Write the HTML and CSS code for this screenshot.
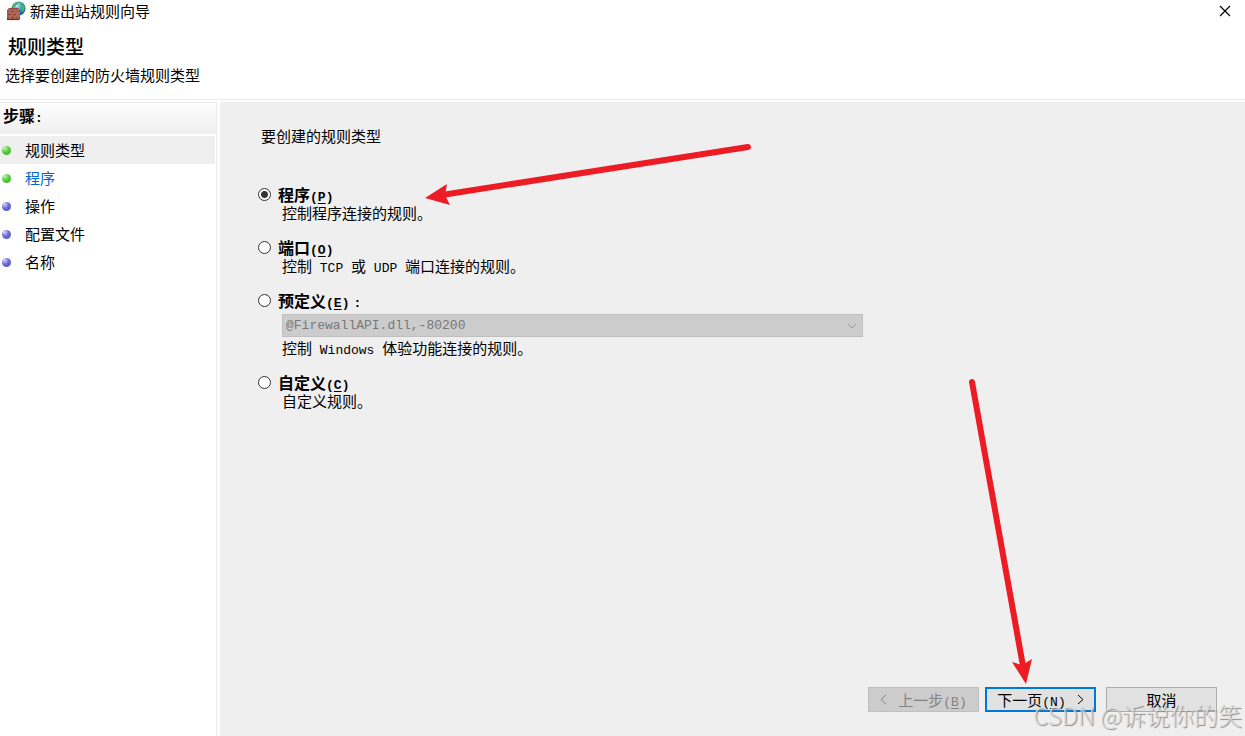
FILE: index.html
```html
<!DOCTYPE html>
<html lang="zh-CN">
<head>
<meta charset="utf-8">
<title>新建出站规则向导</title>
<link rel="stylesheet" href="styles.css">
</head>
<body>
<div class="wizard">
  <header class="head">
    <div class="titlebar">
      <svg class="app-icon" width="20" height="20" viewBox="0 0 20 20" aria-hidden="true">
        <defs>
          <radialGradient id="globe" cx="40%" cy="30%" r="75%"><stop offset="0" stop-color="#c4e9fa"/><stop offset=".5" stop-color="#2f8fd6"/><stop offset="1" stop-color="#164c9a"/></radialGradient>
        </defs>
        <circle cx="12.500" cy="7.500" r="7" fill="url(#globe)"/>
        <path d="M9 2q2-1.500 4-1l-1 2-2 1-1 2-2 1q-.6-3 2-5zM15 2.500q3 1 4 4l-2 5-2-3 1-2-2-2z" fill="#49b749"/>
        <path d="M1 9l2-2h9l2 2v9l-2 1H1z" fill="#984a3c"/>
        <path d="M1 9h11l2-1M1 12h13M1 15h13M4 9v3M9 9v3M6 12v3M11 12v3M4 15v4M9 15v4M12 9v10" stroke="#ce9586" stroke-width=".6" fill="none"/>
        <path d="M1 18.600h11l2-1" stroke="#612e29" fill="none"/>
      </svg>
      <span class="caption">新建出站规则向导</span>
      <button class="close" type="button" aria-label="关闭">
        <svg width="12" height="12" viewBox="0 0 12 12"><path d="M1 1l10 10M11 1L1 11" stroke="#000" stroke-width="1.200"/></svg>
      </button>
    </div>
    <h1 class="heading">规则类型</h1>
    <p class="subheading">选择要创建的防火墙规则类型</p>
  </header>

  <div class="body">
    <nav class="steps">
      <h2 class="steps-title">步骤<span class="en">:</span></h2>
      <ul class="step-list">
        <li class="step current"><span class="dot done"></span>规则类型</li>
        <li class="step"><span class="dot done"></span><a href="#program">程序</a></li>
        <li class="step"><span class="dot"></span>操作</li>
        <li class="step"><span class="dot"></span>配置文件</li>
        <li class="step"><span class="dot"></span>名称</li>
      </ul>
    </nav>

    <main class="content">
      <form class="form">
        <p class="question">要创建的规则类型</p>
        <div class="options">
          <div class="option">
            <input class="radio" type="radio" name="type" id="program" checked>
            <label class="name" for="program">程序<span class="en">(<u>P</u>)</span></label>
            <p class="desc">控制程序连接的规则。</p>
          </div>
          <div class="option">
            <input class="radio" type="radio" name="type" id="port">
            <label class="name" for="port">端口<span class="en">(<u>O</u>)</span></label>
            <p class="desc">控制<span class="en"> TCP </span>或<span class="en"> UDP </span>端口连接的规则。</p>
          </div>
          <div class="option">
            <input class="radio" type="radio" name="type" id="predefined">
            <label class="name" for="predefined">预定义<span class="en">(<u>E</u>)</span><span class="en">:</span></label>
            <div class="combo">
              <select class="select" aria-label="预定义" disabled><option>@FirewallAPI.dll,-80200</option></select>
              <svg class="chevron" width="10" height="6" viewBox="0 0 10 6"><path d="M1 1l4 4 4-4" fill="none" stroke="#9b9b9b"/></svg>
            </div>
            <p class="desc">控制<span class="en"> Windows </span>体验功能连接的规则。</p>
          </div>
          <div class="option">
            <input class="radio" type="radio" name="type" id="custom">
            <label class="name" for="custom">自定义<span class="en">(<u>C</u>)</span></label>
            <p class="desc">自定义规则。</p>
          </div>
        </div>
      </form>
      <footer class="actions">
        <button class="btn" type="button" disabled><svg class="angle" width="7" height="11" viewBox="0 0 7 11"><path d="M6 1L1 5.500l5 4.500"/></svg><span>上一步<span class="en">(<u>B</u>)</span></span></button>
        <button class="btn primary" type="button"><span>下一页<span class="en">(<u>N</u>)</span></span><svg class="angle" width="7" height="11" viewBox="0 0 7 11"><path d="M1 1l5 4.500L1 10"/></svg></button>
        <button class="btn cancel" type="button">取消</button>
      </footer>
    </main>
  </div>

  <svg class="arrows" width="1040" height="690" viewBox="0 0 1040 690" aria-hidden="true">
    <g stroke="#ed1c24" stroke-width="6" stroke-linecap="round">
      <path d="M748 147L442 195"/>
      <path d="M972 382L1023 666"/>
    </g>
    <path d="M425 198L447 184 445 195 450 205z" fill="#ed1c24"/>
    <path d="M1026 684L1012 662 1022 665 1032 659z" fill="#ed1c24"/>
  </svg>
  <div class="watermark">CSDN @诉说你的笑</div>
</div>
</body>
</html>
```

FILE: styles.css
```css
* { box-sizing: border-box; }

body, h1, h2, p, ul { margin: 0; padding: 0; }

body {
  font: 15px/18px "Noto Sans CJK SC", sans-serif;
  color: #000;
  background: #fff;
}

.wizard {
  position: relative;
  display: flex;
  flex-direction: column;
  min-height: 100vh;
  overflow: hidden;
}

.en { font-family: "Liberation Mono", monospace; font-size: 13px; line-height: 1; white-space: pre; }

.head { border-bottom: 1px solid #ebebeb; padding-bottom: 15px; }

.titlebar {
  display: flex;
  align-items: center;
  height: 22px;
  padding: 0 14px 0 6px;
  gap: 4px;
}

.caption { flex: 1; }

.close { display: flex; padding: 0; border: 0; background: none; }

.heading {
  padding: 12px 8px 0;
  font-size: 19px;
  line-height: 24px;
  font-weight: 500;
}

.subheading { padding: 8px 5px 0; }

.body { flex: 1; display: flex; gap: 3px; padding-top: 2px; }

.steps { width: 217px; flex: none; border: 1px solid #ebebeb; border-width: 1px 1px 0 0; }

.steps-title {
  height: 31px;
  padding: 0 3px;
  font-size: 16px;
  line-height: 24px;
  font-weight: 700;
  background: linear-gradient(#fdfdfd, #efefef);
}

.step-list { list-style: none; padding: 2px 1px 0 0; }

.step {
  display: flex;
  align-items: center;
  gap: 14px;
  height: 28px;
  padding-left: 2px;
}

.step.current { background: #efefef; }
.step a { color: #0066cc; text-decoration: none; }

.dot {
  width: 9px;
  height: 9px;
  border-radius: 50%;
  background: radial-gradient(circle at 30% 25%, #d3d3f6 0, #6969d2 45%, #5252b5 100%);
}

.dot.done { background: radial-gradient(circle at 30% 25%, #c5f2bd 0, #56ce3a 45%, #38a728 100%); }

.content {
  flex: 1;
  display: flex;
  flex-direction: column;
  justify-content: space-between;
  padding: 25px 28px 24px 37px;
  background: #efefef;
}

.question { padding-left: 4px; }

.options { display: grid; gap: 16px; padding-top: 40px; }

.option {
  display: grid;
  grid-template-columns: 14px minmax(0, 1fr);
  column-gap: 7px;
  align-items: center;
}

.radio {
  appearance: none;
  width: 13px;
  height: 13px;
  margin: 0 0 0 1px;
  border: 1px solid #333;
  border-radius: 50%;
  background: #fff;
}

.radio:checked { background: radial-gradient(circle, #333 0 3px, #fff 4px); }

.name { font-size: 16px; line-height: 18px; font-weight: 700; }
.name u, .btn u { text-underline-offset: 2px; }
.name .en + .en { padding-left: 4px; }
.desc { grid-column: 2; padding: 0 0 0 4px; line-height: 18px; }

.combo {
  position: relative;
  grid-column: 2;
  width: 100%;
  max-width: 585px;
  padding: 4px 0 2px 4px;
}

.select {
  display: block;
  appearance: none;
  width: 100%;
  height: 23px;
  padding: 0 3px;
  border: 1px solid #bfbfbf;
  border-radius: 0;
  background: #ccc;
  color: #787878;
  font: 13px "Liberation Mono", monospace;
  opacity: 1;
}

.chevron { position: absolute; right: 6px; bottom: 10px; }

.actions { display: flex; justify-content: flex-end; gap: 10px; }

.btn {
  display: flex;
  align-items: center;
  justify-content: center;
  gap: 11px;
  width: 111px;
  height: 25px;
  padding: 0;
  border: 1px solid #adadad;
  background: #e1e1e1;
  color: #000;
  font: inherit;
}

.btn:disabled { margin-right: -4px; border-color: #bfbfbf; background: #ccc; color: #838383; }
.btn.primary { border: 2px solid #0078d7; }
.angle { fill: none; stroke: currentColor; }

.arrows { position: absolute; left: 0; top: 0; pointer-events: none; }

.watermark {
  position: absolute;
  right: 3px;
  bottom: 6px;
  font-size: 24px;
  line-height: 30px;
  font-weight: 300;
  color: rgba(225, 225, 225, 0.8);
  text-shadow: 1px 1px 1px #888;
  pointer-events: none;
}
```
